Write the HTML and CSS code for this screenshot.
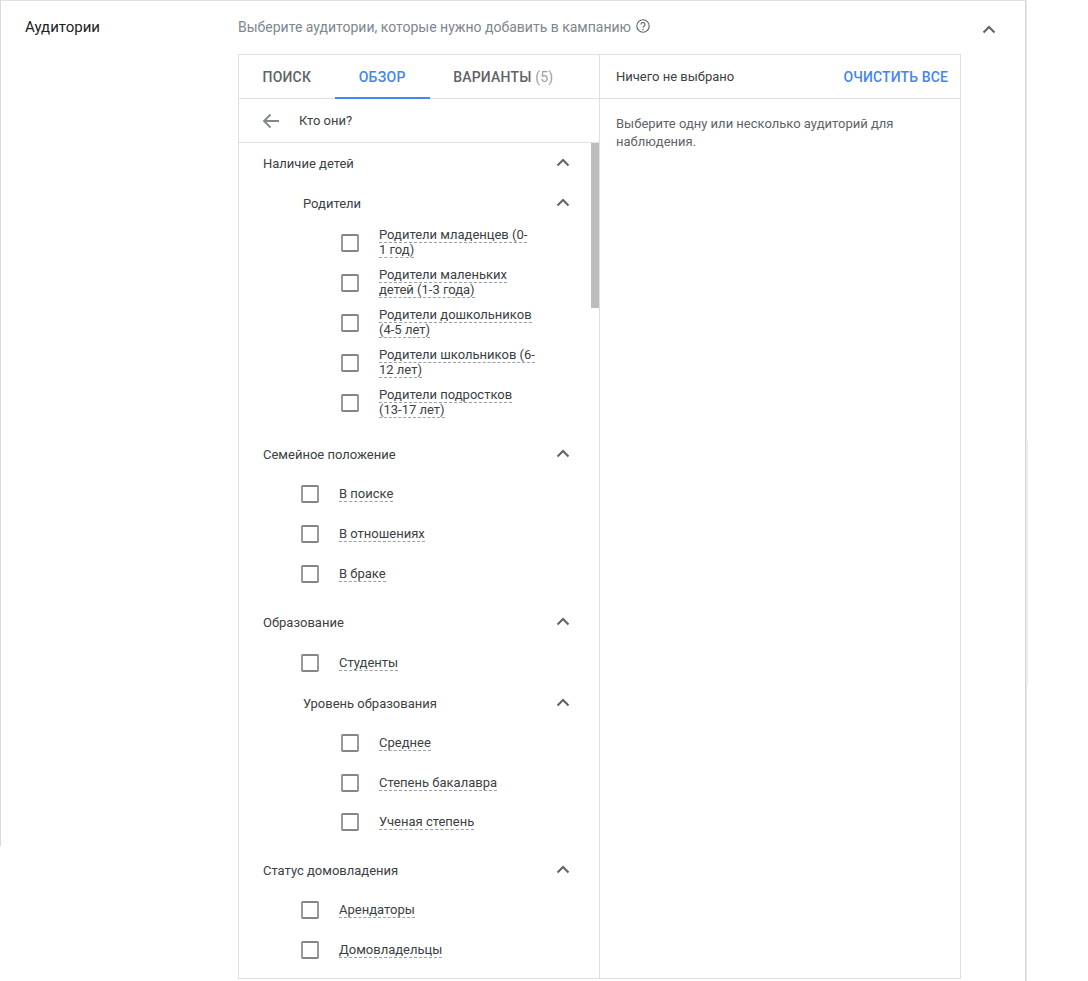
FILE: index.html
```html
<!DOCTYPE html>
<html lang="ru">
<head>
<meta charset="utf-8">
<title>Аудитории</title>
<link rel="stylesheet" href="styles.css">
</head>
<body>
<svg class="sprite" width="0" height="0" aria-hidden="true">
  <symbol id="chev" viewBox="0 0 14 9"><path d="M1.500 7.500 7 2l5.500 5.500" fill="none" stroke="currentColor" stroke-width="2"/></symbol>
</svg>
<main class="card">
  <h2 class="card-title">Аудитории</h2>
  <div class="card-body">
    <div class="hint">
      <span>Выберите аудитории, которые нужно добавить в кампанию</span>
      <svg class="help" viewBox="0 0 14 14" width="14" height="14"><circle cx="7" cy="7" r="6.200" fill="none" stroke="currentColor" stroke-width="1.100"/><path d="M5 5.500a2 2 0 1 1 3.100 1.700c-.7.5-1.100.8-1.100 1.600" fill="none" stroke="currentColor" stroke-width="1.100"/><circle cx="7" cy="10.500" r=".75" fill="currentColor"/></svg>
    </div>
    <div class="panel">
      <section class="pane-left">
        <nav class="tabs">
          <a class="tab">Поиск</a>
          <a class="tab tab-active">Обзор</a>
          <a class="tab">Варианты <span class="count">(5)</span></a>
        </nav>
        <div class="back">
          <svg class="back-icon" viewBox="0 0 18 16" width="18" height="16"><path d="M17 8H2M8.500 1.500 2 8l6.500 6.500" fill="none" stroke="currentColor" stroke-width="1.800"/></svg>
          <span>Кто они?</span>
        </div>
        <div class="tree">
          <div class="thumb"></div>
          <div class="head"><span>Наличие детей</span><svg class="chev"><use href="#chev"/></svg></div>
          <div class="head head-sub"><span>Родители</span><svg class="chev"><use href="#chev"/></svg></div>
          <label class="item item-deep"><i class="box"></i><span class="lbl"><span class="dash">Родители младенцев (0-<br>1 год)</span></span></label>
          <label class="item item-deep"><i class="box"></i><span class="lbl"><span class="dash">Родители маленьких детей (1-3 года)</span></span></label>
          <label class="item item-deep"><i class="box"></i><span class="lbl"><span class="dash">Родители дошкольников (4-5 лет)</span></span></label>
          <label class="item item-deep"><i class="box"></i><span class="lbl"><span class="dash">Родители школьников (6-12 лет)</span></span></label>
          <label class="item item-deep"><i class="box"></i><span class="lbl"><span class="dash">Родители подростков<br>(13-17 лет)</span></span></label>

          <div class="head head-a"><span>Семейное положение</span><svg class="chev"><use href="#chev"/></svg></div>
          <label class="item"><i class="box"></i><span class="lbl"><span class="dash">В поиске</span></span></label>
          <label class="item"><i class="box"></i><span class="lbl"><span class="dash">В отношениях</span></span></label>
          <label class="item"><i class="box"></i><span class="lbl"><span class="dash">В браке</span></span></label>

          <div class="head head-b"><span>Образование</span><svg class="chev"><use href="#chev"/></svg></div>
          <label class="item item-c"><i class="box"></i><span class="lbl"><span class="dash">Студенты</span></span></label>
          <div class="head head-sub"><span>Уровень образования</span><svg class="chev"><use href="#chev"/></svg></div>
          <label class="item item-deep"><i class="box"></i><span class="lbl"><span class="dash">Среднее</span></span></label>
          <label class="item item-deep"><i class="box"></i><span class="lbl"><span class="dash">Степень бакалавра</span></span></label>
          <label class="item item-deep item-tight"><i class="box"></i><span class="lbl"><span class="dash">Ученая степень</span></span></label>

          <div class="head head-b"><span>Статус домовладения</span><svg class="chev"><use href="#chev"/></svg></div>
          <label class="item"><i class="box"></i><span class="lbl"><span class="dash">Арендаторы</span></span></label>
          <label class="item"><i class="box"></i><span class="lbl"><span class="dash">Домовладельцы</span></span></label>
        </div>
      </section>
      <section class="pane-right">
        <div class="summary">
          <span>Ничего не выбрано</span>
          <a class="clear">Очистить все</a>
        </div>
        <p class="empty">Выберите одну или несколько аудиторий для наблюдения.</p>
      </section>
    </div>
  </div>
  <svg class="collapse"><use href="#chev"/></svg>
</main>
<div class="edge-left"></div>
<div class="edge-right"></div>
</body>
</html>
```
FILE: styles.css
```css
* { box-sizing: border-box; }
html, body { margin: 0; height: 981px; overflow: hidden; background: #fff; }
body { font-family: Roboto, "Liberation Sans", sans-serif; color: #3c4043; position: relative; }
.sprite { position: absolute; }
.card {
  width: 1026px; height: 981px; display: flex; align-items: flex-start;
  border-top: 1px solid #e0e0e0; border-right: 1px solid #d6d6d6;
  box-shadow: 1px 0 0 #e8e8e8; position: relative; background: #fff;
}
.edge-left { position: absolute; left: 0; top: 0; width: 1px; height: 846px; background: #dadada; }
.edge-right { position: absolute; left: 1026px; top: 441px; width: 2px; height: 244px; background: #ececec; }
.card-title { margin: 17px 0 0 25px; width: 213px; font-size: 15px; line-height: 18px; font-weight: 400; color: #202124; }
.card-body { width: 723px; padding-top: 16px; }
.hint { display: flex; align-items: center; gap: 5px; height: 20px; font-size: 14px; color: #80868b; }
.help { color: #5f6368; margin-top: -2px; }
.panel { display: flex; margin-top: 17px; height: 925px; width: 723px; border: 1px solid #e0e0e0; }
.pane-left { width: 361px; border-right: 1px solid #e0e0e0; display: flex; flex-direction: column; }
.tabs { display: flex; height: 44px; border-bottom: 1px solid #e0e0e0; }
.tab { padding: 0 23.500px; height: 44px; line-height: 45px; font-size: 14px; font-weight: 500; letter-spacing: .2px; text-transform: uppercase; color: #5f6368; white-space: nowrap; }
.tab-active { padding: 0 24px; letter-spacing: .3px; color: #4285f4; border-bottom: 2px solid #4285f4; }
.tab .count { font-weight: 400; color: #9aa0a6; }
.back { display: flex; align-items: center; height: 44px; padding-left: 23px; border-bottom: 1px solid #e0e0e0; font-size: 13px; color: #3c4043; }
.back-icon { color: #80868b; margin-right: 19px; }
.tree { position: relative; flex: 1; overflow: hidden; }
.thumb { position: absolute; right: 0; top: 0; width: 8px; height: 165px; background: #bdbdbd; }
.head { display: flex; align-items: center; justify-content: space-between; height: 40px; padding: 0 29px 0 24px; font-size: 13px; color: #3c4043; }
.head-sub { padding-left: 64px; }
.head-a { margin-top: 11px; }
.head-b { margin-top: 8px; }
.chev { width: 14px; height: 9px; color: #5f6368; margin-top: -2px; }
.item { display: flex; align-items: center; height: 40px; padding-left: 62px; font-size: 13px; line-height: 15px; color: #3c4043; }
.item-deep { padding-left: 102px; }
.item-c { margin-top: 1px; }
.item-tight { margin-top: -1px; }
.box { flex: none; width: 18px; height: 18px; border: 2px solid #858585; border-left-color: #999; border-right-color: #999; border-radius: 2px; margin-right: 20px; }
.lbl { width: 160px; margin-top: -2px; }
.dash { border-bottom: 1px dashed #9aa0a6; }
.pane-right { flex: 1; display: flex; flex-direction: column; }
.summary { display: flex; align-items: center; justify-content: space-between; height: 44px; padding: 0 12px 0 16px; border-bottom: 1px solid #e0e0e0; font-size: 13px; color: #3c4043; }
.clear { font-size: 14px; font-weight: 500; letter-spacing: .12px; text-transform: uppercase; color: #4285f4; }
.empty { margin: 16px 16px 0; font-size: 13px; line-height: 18px; color: #5f6368; }
.collapse { position: absolute; left: 982px; top: 24px; width: 14px; height: 9px; color: #5f6368; }
```
